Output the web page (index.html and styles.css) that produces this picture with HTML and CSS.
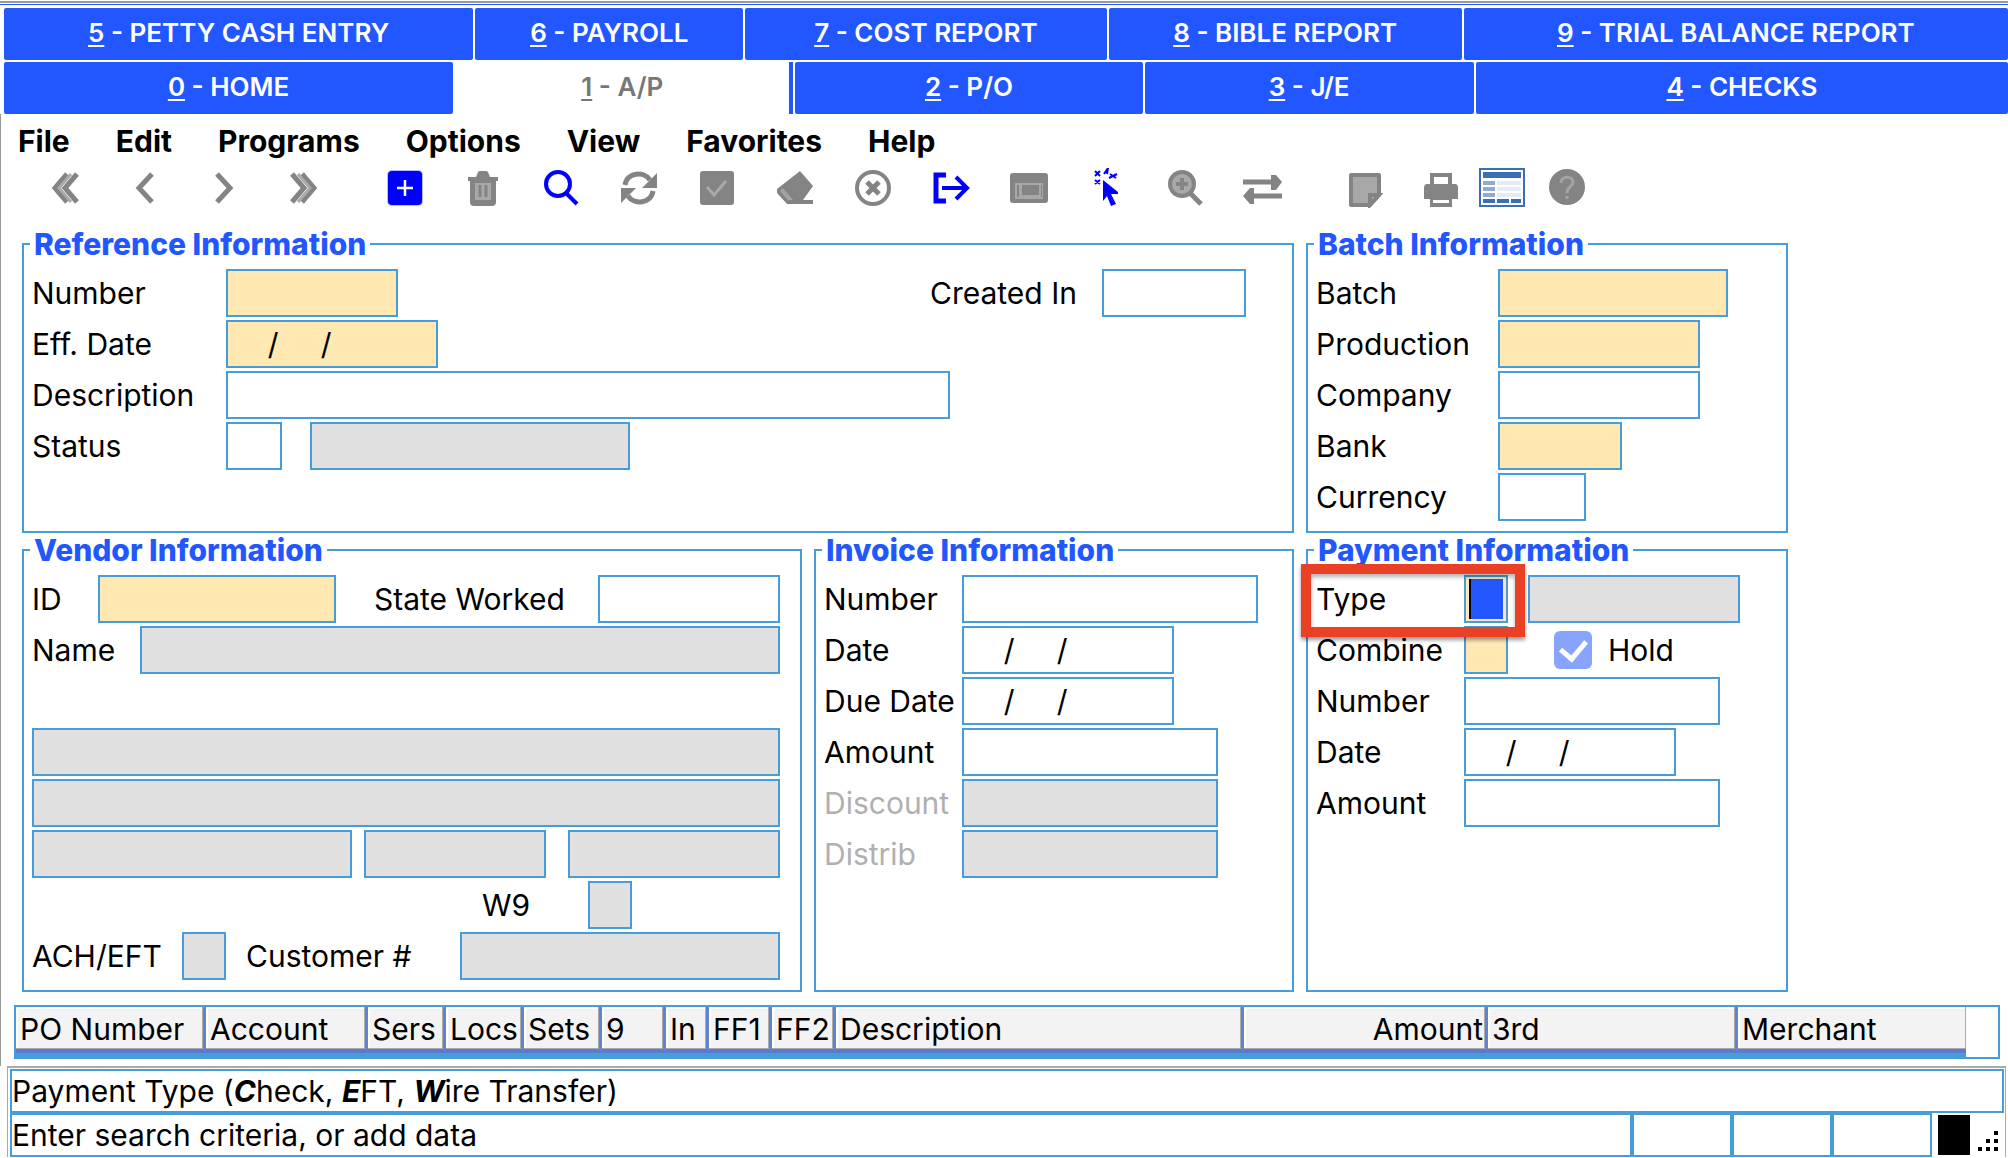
FILE: index.html
```html
<!DOCTYPE html>
<html lang="en">
<head>
    <meta charset="UTF-8">
    <meta name="viewport" content="width=device-width, initial-scale=1.0">
    <title>A/P</title>
    <link rel="stylesheet" href="styles.css">
</head>
<body>
    <nav class="tabs">
        <div class="tab-row tab-row-back">
            <button class="tab"><u>5</u> - PETTY CASH ENTRY</button>
            <button class="tab"><u>6</u> - PAYROLL</button>
            <button class="tab"><u>7</u> - COST REPORT</button>
            <button class="tab"><u>8</u> - BIBLE REPORT</button>
            <button class="tab"><u>9</u> - TRIAL BALANCE REPORT</button>
        </div>
        <div class="tab-row tab-row-front">
            <button class="tab"><u>0</u> - HOME</button>
            <button class="tab active"><u>1</u> - A/P</button>
            <button class="tab"><u>2</u> - P/O</button>
            <button class="tab"><u>3</u> - J/E</button>
            <button class="tab"><u>4</u> - CHECKS</button>
        </div>
    </nav>

    <div class="menu">
        <button>File</button>
        <button>Edit</button>
        <button>Programs</button>
        <button>Options</button>
        <button>View</button>
        <button>Favorites</button>
        <button>Help</button>
    </div>

    <div class="toolbar">
        <div class="tools tools-nav">
            <button aria-label="First"><svg viewBox="0 0 40 40"><path d="M21 6 9 20l12 14M31 6 19 20l12 14" class="line thick"/><path d="M25 6 13 20l12 14" class="line pale"/></svg></button>
            <button aria-label="Previous"><svg viewBox="0 0 40 40"><path d="M27 6 14 20l13 14" class="line thick"/></svg></button>
            <button aria-label="Next"><svg viewBox="0 0 40 40"><path d="m13 6 13 14-13 14" class="line thick"/></svg></button>
            <button aria-label="Last"><svg viewBox="0 0 40 40"><path d="m9 6 12 14L9 34M19 6l12 14-12 14" class="line thick"/><path d="m15 6 12 14-12 14" class="line pale"/></svg></button>
        </div>
        <div class="tools">
            <button aria-label="Add"><svg viewBox="0 0 40 40"><rect x="2" y="2" width="36" height="36" rx="5" fill="#b9b9ff"/><rect x="3" y="3" width="34" height="34" rx="4" fill="#0000ff"/><path d="M20 12v16M12 20h16" stroke="#fff" stroke-width="2.5"/></svg></button>
            <button aria-label="Delete"><svg viewBox="0 0 40 40"><path d="M5 9h8l2-5q1-1 2-1h6q1 0 2 1l2 5h8v4h-2v21q0 4-4 4H11q-4 0-4-4V13H5z" fill="#848484"/><path d="M12 15h16v17H12z" fill="#a8a8a8"/><path d="M17 17v12M23 17v12" class="line" stroke-width="4"/></svg></button>
            <button aria-label="Search" class="blue"><svg viewBox="0 0 40 40"><circle cx="17" cy="16" r="12" class="line bold"/><path d="m25 25 11 11" class="line bold"/></svg></button>
            <button aria-label="Refresh"><svg viewBox="0 0 40 40"><path d="M6 17C8 4 25 3 31 12M34 23c-2 13-19 14-25 5" class="line thick"/><path d="M38 5v15H23zM2 35V20h15z" fill="#848484"/></svg></button>
            <button aria-label="Accept"><svg viewBox="0 0 40 40"><rect x="3" y="3" width="34" height="34" rx="3" fill="#848484"/><path d="m10 19 7 8 12-14" stroke="#aaa" stroke-width="3" fill="none"/></svg></button>
            <button aria-label="Clear"><svg viewBox="0 0 40 40"><path d="m25 3 13 15-10 14h10v4H12L2 25v-4z" fill="#848484"/><path d="m8 20 10 12h-5l-8-9z" fill="#a4a4a4"/></svg></button>
            <button aria-label="Cancel"><svg viewBox="0 0 40 40"><circle cx="20" cy="20" r="16" class="line bold"/><path d="m14 14 12 12m0-12L14 26" class="line thick"/></svg></button>
            <button aria-label="Exit" class="blue"><svg viewBox="0 0 40 40"><path d="M15 7H5v26h10" class="line thick"/><path d="M11 20h24M25 9l11 11-11 11" class="line bold"/></svg></button>
            <button aria-label="Window"><svg viewBox="0 0 40 40"><rect x="1" y="5" width="38" height="30" rx="3" fill="#848484"/><path d="M6 15h28v16H6z" fill="#a8a8a8"/><path d="M8 17h2v12H8zM13 17h17v10H13zM32 17h1v12h-1z" fill="#848484"/></svg></button>
            <button aria-label="Select" class="blue"><svg viewBox="0 0 40 40"><path d="m16 12 15 12v2h-7l5 10-5 2-4-10-4 5z" fill="#0000ff"/><path d="m8 3 5 5m0-5L8 8m0 4 5 4m0-4-5 4M17 6l4-6-1 6M23 6l6 4M22 10l8-4" class="line thin"/></svg></button>
            <button aria-label="Zoom"><svg viewBox="0 0 40 40"><path d="m25 25 11 11" class="line thick"/><circle cx="17" cy="16" r="12" fill="#a8a8a8" stroke="#848484" stroke-width="4"/><path d="M17 10v12M11 16h12" class="line bold"/></svg></button>
            <button aria-label="Swap"><svg viewBox="0 0 40 40"><path d="M0 14h32M8 28h31" class="line thick"/><path d="M28 7h5l6 7-6 8h-5zM11 20H7l-7 8 7 8h4z" fill="#848484"/></svg></button>
        </div>
        <div class="tools tools-end">
            <button aria-label="Note"><svg viewBox="0 0 40 40"><path d="M6 7h28v20l-9 10H6z" fill="#a8a8a8" stroke="#848484" stroke-width="4" stroke-linejoin="round"/><path d="M34 27h-9v10z" fill="#a8a8a8" stroke="#848484" stroke-width="4"/></svg></button>
            <button aria-label="Print"><svg viewBox="0 0 40 40"><path d="M11 17V7h18v10" class="line bold"/><path d="M6 16h28q3 0 3 4v11h-6v8H9v-8H3V20q0-4 3-4z" fill="#848484"/><path d="M12 32h16v3H12z" fill="#fff"/></svg></button>
        </div>
        <div class="tools tools-end">
            <button aria-label="Grid" class="wide"><svg viewBox="0 0 46 40"><path d="M1 1h44v37H1z" fill="#fff" stroke="#3a6eb5" stroke-width="2"/><path d="M4 4h38v6H4zM4 31h12v4H4zM18 31h12v4H18zM32 31h10v4H32z" fill="#3a6eb5"/><path d="M4 13h12v4H4zM4 19h12v4H4zM4 25h12v4H4z" fill="#91aad4"/><path d="M18 13h24v4H18zM18 19h24v4H18zM18 25h24v4H18z" fill="#e5ecf6"/></svg></button>
            <button aria-label="Help topics"><svg viewBox="0 0 40 40"><circle cx="20" cy="19" r="18" fill="#848484"/><path d="M14 15c0-8 12-7 12-1 0 4-6 5-6 11M20 28v3" stroke="#a4a4a4" stroke-width="3" fill="none"/></svg></button>
        </div>
    </div>

    <main class="panels">
        <fieldset class="panel reference">
            <legend>Reference Information</legend>
            <div class="row">
                <label for="refNumber">Number</label>
                <input type="text" id="refNumber" class="w172 required">
                <label for="createdIn" class="created-label">Created In</label>
                <input type="text" id="createdIn" class="w144 created">
            </div>
            <div class="row">
                <label for="effDate">Eff. Date</label>
                <input type="text" id="effDate" class="w212 required" value="    /     /">
            </div>
            <div class="row">
                <label for="refDescription">Description</label>
                <input type="text" id="refDescription" class="w724">
            </div>
            <div class="row">
                <label for="status">Status</label>
                <input type="text" id="status" class="w56">
                <input type="text" aria-label="Status name" class="w320 status-name" disabled>
            </div>
        </fieldset>

        <fieldset class="panel batch">
            <legend>Batch Information</legend>
            <div class="row">
                <label for="batch">Batch</label>
                <input type="text" id="batch" class="w230 required">
            </div>
            <div class="row">
                <label for="production">Production</label>
                <input type="text" id="production" class="w202 required">
            </div>
            <div class="row">
                <label for="company">Company</label>
                <input type="text" id="company" class="w202">
            </div>
            <div class="row">
                <label for="bank">Bank</label>
                <input type="text" id="bank" class="w124 required">
            </div>
            <div class="row">
                <label for="currency">Currency</label>
                <input type="text" id="currency" class="w88">
            </div>
        </fieldset>

        <fieldset class="panel vendor">
            <legend>Vendor Information</legend>
            <div class="row">
                <label for="vendorId" class="id-label">ID</label>
                <input type="text" id="vendorId" class="w238 required">
                <label for="stateWorked" class="state-label">State Worked</label>
                <input type="text" id="stateWorked" class="w182">
            </div>
            <div class="row">
                <label for="vendorName" class="name-label">Name</label>
                <input type="text" id="vendorName" class="grow" disabled>
            </div>
            <div class="row"></div>
            <div class="row">
                <input type="text" aria-label="Address line 1" class="grow" disabled>
            </div>
            <div class="row">
                <input type="text" aria-label="Address line 2" class="grow" disabled>
            </div>
            <div class="row city-row">
                <input type="text" aria-label="City" class="w320" disabled>
                <input type="text" aria-label="State" class="w182" disabled>
                <input type="text" aria-label="Zip" class="w212 zip" disabled>
            </div>
            <div class="row w9-row">
                <label for="w9">W9</label>
                <input type="text" id="w9" class="w44" disabled>
            </div>
            <div class="row">
                <label for="ach" class="ach-label">ACH/EFT</label>
                <input type="text" id="ach" class="w44" disabled>
                <label for="customer" class="customer-label">Customer #</label>
                <input type="text" id="customer" class="grow" disabled>
            </div>
        </fieldset>

        <fieldset class="panel invoice">
            <legend>Invoice Information</legend>
            <div class="row">
                <label for="invNumber">Number</label>
                <input type="text" id="invNumber" class="w296">
            </div>
            <div class="row">
                <label for="invDate">Date</label>
                <input type="text" id="invDate" class="w212" value="    /     /">
            </div>
            <div class="row">
                <label for="dueDate">Due Date</label>
                <input type="text" id="dueDate" class="w212" value="    /     /">
            </div>
            <div class="row">
                <label for="invAmount">Amount</label>
                <input type="text" id="invAmount" class="w256">
            </div>
            <div class="row">
                <label for="discount" class="off">Discount</label>
                <input type="text" id="discount" class="w256" disabled>
            </div>
            <div class="row">
                <label for="distrib" class="off">Distrib</label>
                <input type="text" id="distrib" class="w256" disabled>
            </div>
        </fieldset>

        <fieldset class="panel payment">
            <legend>Payment Information</legend>
            <div class="row type-row">
                <label for="payType">Type</label>
                <input type="text" id="payType" class="w44 required selected">
                <input type="text" aria-label="Type name" class="w212 type-name" disabled>
                <span class="marker"></span>
            </div>
            <div class="row">
                <label for="combine">Combine</label>
                <input type="text" id="combine" class="w44 required">
                <input type="checkbox" id="hold" checked>
                <label for="hold" class="hold-label">Hold</label>
            </div>
            <div class="row">
                <label for="payNumber">Number</label>
                <input type="text" id="payNumber" class="w256">
            </div>
            <div class="row">
                <label for="payDate">Date</label>
                <input type="text" id="payDate" class="w212" value="    /     /">
            </div>
            <div class="row">
                <label for="payAmount">Amount</label>
                <input type="text" id="payAmount" class="w256">
            </div>
        </fieldset>
    </main>

    <div class="lines">
        <table>
            <colgroup>
                <col class="c190"><col class="c162"><col class="c78"><col class="c78"><col class="c78"><col class="c64"><col class="c43"><col class="c63"><col class="c64"><col><col class="c244"><col class="c250"><col class="c228">
            </colgroup>
            <thead>
                <tr>
                    <th>PO Number</th>
                    <th>Account</th>
                    <th>Sers</th>
                    <th>Locs</th>
                    <th>Sets</th>
                    <th>9</th>
                    <th>In</th>
                    <th>FF1</th>
                    <th>FF2</th>
                    <th>Description</th>
                    <th class="num">Amount</th>
                    <th>3rd</th>
                    <th>Merchant</th>
                </tr>
            </thead>
        </table>
    </div>

    <footer class="status">
        <div class="hint">Payment Type (<b>C</b>heck, <b>E</b>FT, <b>W</b>ire Transfer)</div>
        <div class="status-row">
            <div class="message">Enter search criteria, or add data</div>
            <div class="cell"></div>
            <div class="cell"></div>
            <div class="cell"></div>
            <span class="block"></span>
            <svg class="grip" viewBox="0 0 20 20"><path d="M16 0h4v4h-4zM8 8h4v4H8zM16 8h4v4h-4zM0 16h4v4H0zM8 16h4v4H8zM16 16h4v4h-4z"/></svg>
        </div>
    </footer>
</body>
</html>
```
FILE: styles.css
```css
* {
    box-sizing: border-box;
}
body {
    margin: 0;
    padding-top: 1px;
    background: #fff;
    font-family: Inter, "Liberation Sans", sans-serif;
    font-size: 30px;
    line-height: 34px;
    color: #000;
}
button, input {
    font: inherit;
    color: inherit;
    margin: 0;
}
button {
    border: none;
    padding: 0;
    background: none;
    cursor: pointer;
}

/* tabs */
.tabs {
    border-top: 2px solid #999;
    padding-top: 1px;
}
.tab-row {
    display: grid;
    gap: 2px;
    padding-left: 4px;
}
.tab-row-back {
    grid-template-columns: 469fr 268fr 361fr 353fr 544fr;
    border-top: 1px solid #2257ff;
    padding-top: 3px;
}
.tab-row-front {
    grid-template-columns: 449fr 338fr 347fr 329fr 532fr;
    padding-top: 2px;
}
.tab {
    height: 52px;
    padding-bottom: 2px;
    background: #2257ff;
    color: #fff;
    font-size: 26px;
    font-weight: 600;
    border-radius: 2px;
    white-space: nowrap;
}
.tab u {
    text-underline-offset: 3px;
    text-decoration-thickness: 2px;
}
.tab.active {
    background: #fff;
    color: #777;
    border-right: 4px solid #2257ff;
    border-radius: 0;
}

/* menu and toolbar */
.menu {
    display: flex;
    gap: 46px;
    padding: 10px 17px;
    border-left: 1px solid #999;
}
.menu button {
    font-weight: 700;
}
.toolbar {
    display: flex;
    gap: 62px;
    padding-left: 45px;
    border-left: 1px solid #999;
}
.tools {
    display: flex;
    gap: 38px;
}
.tools-nav {
    gap: 39px;
}
.tools-end {
    gap: 36px;
}
.tools-end + .tools-end {
    gap: 22px;
    margin-left: -44px;
}
.tools button {
    width: 40px;
    height: 40px;
}
.tools .wide {
    width: 46px;
}
.tools svg {
    display: block;
    width: 100%;
    height: 40px;
}
.line {
    fill: none;
    stroke: #848484;
    stroke-width: 3;
}
.thin {
    stroke-width: 2;
}
.bold {
    stroke-width: 4;
}
.thick {
    stroke-width: 5;
}
.pale {
    stroke: #aaa;
}
.blue .line {
    stroke: #0000ff;
}

/* panels */
.panels {
    display: grid;
    grid-template-columns: 780fr 480fr 482fr;
    column-gap: 12px;
    padding: 19px 220px 13px 21px;
    border-left: 1px solid #999;
}
.panel {
    display: block;
    min-width: 0;
    margin: 0;
    padding: 8px 8px 10px;
    border: 2px solid #479dd9;
}
.reference {
    grid-column: span 2;
}
.vendor {
    padding-right: 20px;
}
legend {
    margin-left: -2px;
    padding: 0 4px;
    color: #2257ff;
    font-weight: 800;
}
.row {
    display: flex;
    align-items: center;
    height: 48px;
    margin-bottom: 3px;
}
.row:last-child {
    margin-bottom: 0;
}
label {
    flex: none;
    white-space: nowrap;
}
.off {
    color: #b0b0b0;
}
.reference label {
    width: 194px;
}
.batch label {
    width: 182px;
}
.invoice label {
    width: 138px;
}
.payment label {
    width: 148px;
}
.reference .created-label {
    width: 172px;
    margin-left: auto;
}
.created {
    margin-right: 38px;
}
.status-name {
    margin-left: 28px;
}
.id-label {
    width: 66px;
}
.state-label {
    width: 224px;
    margin-left: auto;
}
.name-label {
    width: 108px;
}
.ach-label {
    width: 150px;
}
.customer-label {
    width: 214px;
    margin-left: 20px;
}
.city-row {
    gap: 12px;
}
.zip {
    margin-left: auto;
}
.w9-row {
    padding-left: 450px;
}
.w9-row label {
    width: 106px;
}

input[type="text"] {
    height: 48px;
    padding: 0 6px;
    border: 2px solid #479dd9;
    border-radius: 0;
    background: #fff;
    outline: none;
}
input[type="text"]:disabled {
    background: #e0e0e0;
}
input[type="text"].required {
    background: #ffe8b1;
}
input[type="text"].selected {
    background: linear-gradient(90deg, #000 2px, #2257ff 2px) 3px 2px / 34px 40px no-repeat #ffe8b1;
}
.w44 { width: 44px; }
.w56 { width: 56px; }
.w88 { width: 88px; }
.w124 { width: 124px; }
.w144 { width: 144px; }
.w172 { width: 172px; }
.w182 { width: 182px; }
.w202 { width: 202px; }
.w212 { width: 212px; }
.w230 { width: 230px; }
.w238 { width: 238px; }
.w256 { width: 256px; }
.w296 { width: 296px; }
.w320 { width: 320px; }
.w724 { width: 724px; }
.grow {
    flex: 1;
    min-width: 0;
}

.type-row {
    position: relative;
}
.type-name {
    margin-left: 20px;
}
.marker {
    position: absolute;
    left: -15px;
    top: -11px;
    width: 224px;
    height: 73px;
    border: 10px solid #ea4025;
    box-shadow: 0 3px 4px rgba(0, 0, 0, 0.4), inset 0 3px 4px rgba(0, 0, 0, 0.3);
    pointer-events: none;
}
#hold {
    appearance: none;
    width: 38px;
    height: 38px;
    margin-left: 46px;
    border-radius: 6px;
    background: #87a5ff;
    display: grid;
    place-items: center;
}
#hold:checked::before {
    content: "";
    width: 12px;
    height: 20px;
    margin-bottom: 6px;
    border: solid #fff;
    border-width: 0 5px 5px 0;
    transform: rotate(40deg);
}
.payment .hold-label {
    width: auto;
    margin-left: 16px;
}

/* distribution lines */
.lines {
    padding: 0 8px 7px 13px;
    border-left: 1px solid #999;
}
table {
    width: 100%;
    table-layout: fixed;
    border-collapse: separate;
    border-spacing: 0;
    border: 2px solid #479dd9;
    padding: 0 32px 4px 0;
    background: linear-gradient(#479dd9, #479dd9) 0 100% / calc(100% - 32px) 4px no-repeat;
}
th {
    height: 46px;
    padding: 2px 0 0 4px;
    background: #f3f3f3;
    border-right: 3px solid #5f84d6;
    border-bottom: 4px solid #5c7bd0;
    box-shadow: inset 0 -1px #aaa, inset -1px 0 #aaa, inset 2px 2px #fff;
    font-weight: 400;
    text-align: left;
    white-space: nowrap;
}
th:last-child {
    border-right: none;
}
.num {
    padding: 2px 2px 0 0;
    text-align: right;
}
.c43 { width: 43px; }
.c63 { width: 63px; }
.c64 { width: 64px; }
.c78 { width: 78px; }
.c162 { width: 162px; }
.c190 { width: 190px; }
.c228 { width: 228px; }
.c244 { width: 244px; }
.c250 { width: 250px; }

/* status bar */
.status {
    margin: 0 2px 0 7px;
    padding: 1px 1px 0 2px;
    border: solid #aaa;
    border-width: 2px 1px 0 1px;
}
.hint, .message, .cell {
    height: 44px;
    padding: 3px 0;
    border: 2px solid #479dd9;
}
.hint b {
    font-style: italic;
}
.status-row {
    display: flex;
    align-items: center;
}
.message {
    flex: 1;
    border-right-width: 4px;
}
.cell {
    width: 100px;
    border-left: none;
    border-right-width: 4px;
}
.cell:nth-child(4) {
    width: 98px;
    border-right-width: 2px;
}
.block {
    width: 32px;
    height: 40px;
    margin-left: 6px;
    background: #000;
}
.grip {
    width: 20px;
    height: 20px;
    margin: 12px 6px 0 8px;
}
```
